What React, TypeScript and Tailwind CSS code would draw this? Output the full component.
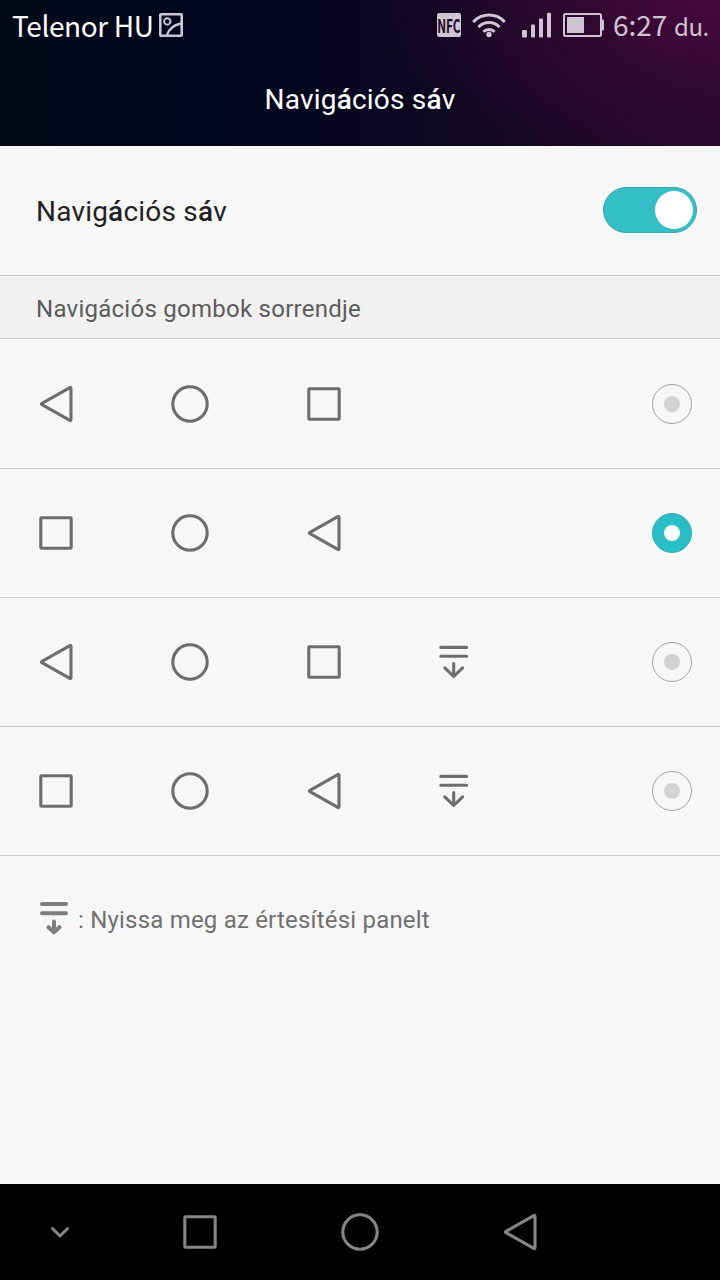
import React from 'react';

type IconName = 'back' | 'home' | 'recent' | 'panel';

function NavIcon({ name, className = '' }: { name: IconName; className?: string }) {
  return (
    <svg
      viewBox="0 0 40 40"
      className={`h-10 w-10 shrink-0 ${className}`}
      fill="none"
      stroke="currentColor"
      strokeWidth="3.1"
      strokeLinecap="round"
      strokeLinejoin="round"
    >
      {name === 'back' && <path d="M6 19.3 33.8 3.6Q35 3 35 4.4V35.6Q35 37 33.8 36.4L6 20.7Q4.7 20 6 19.3Z" />}
      {name === 'home' && <circle cx="20" cy="20" r="17.2" />}
      {name === 'recent' && <rect x="4.8" y="4.8" width="30.4" height="30.4" rx="0.8" />}
      {name === 'panel' && <path d="M6.8 5.4H32.6M6.8 14.3H32.6M19.7 21.5V34.2M10.8 25.9 19.7 34.5 28.6 25.9" />}
    </svg>
  );
}

function Radio({ checked }: { checked: boolean }) {
  return checked ? (
    <span className="flex size-10 items-center justify-center rounded-full border border-[#2fabb0] bg-[#27bfc5]">
      <span className="size-4 rounded-full bg-white" />
    </span>
  ) : (
    <span className="flex size-10 items-center justify-center rounded-full border border-[#a3a3a3]">
      <span className="size-4 rounded-full bg-[#d2d2d2]" />
    </span>
  );
}

const options: { icons: IconName[]; checked: boolean }[] = [
  { icons: ['back', 'home', 'recent'], checked: false },
  { icons: ['recent', 'home', 'back'], checked: true },
  { icons: ['back', 'home', 'recent', 'panel'], checked: false },
  { icons: ['recent', 'home', 'back', 'panel'], checked: false },
];

function Title() {
  return (
    <>
      Navig<span className="font-medium">á</span>ciós s<span className="font-medium">á</span>v
    </>
  );
}

function StatusBar() {
  return (
    <div className="flex h-[50px] items-center pl-3 font-['Noto_Sans_CJK_SC',sans-serif] text-[#cfc4d2]">
      <span className="w-[147px] shrink-0 text-[28px] leading-[50px] tracking-[-0.4px] whitespace-nowrap text-white">
        Telenor HU
      </span>
      <svg viewBox="0 0 24 24" className="size-6 shrink-0" fill="none" stroke="#c9c7d5">
        <rect x="1.3" y="1.3" width="21.4" height="21.4" rx="0.6" strokeWidth="2.6" />
        <circle cx="8.3" cy="8.4" r="3.2" strokeWidth="1.9" />
        <path d="M8 22C10 16 14 12 22 10.5" strokeWidth="2.3" />
      </svg>
      <span className="ml-[254px] flex size-6 shrink-0 items-center justify-center rounded-[2px] bg-[#cfc4d2]">
        <span className="scale-x-[0.62] text-[19px] leading-6 font-bold text-[#1c0b28]">NFC</span>
      </span>
      <svg viewBox="0 0 36 26" className="ml-[10px] h-[26px] w-9 shrink-0" fill="none" stroke="currentColor" strokeWidth="3">
        <path d="M2.2 10C11 0.8 25 0.8 33.8 10M7.4 15.1C13.5 8.9 22.5 8.9 28.6 15.1M12.3 19.8C15.5 16.6 20.5 16.6 23.7 19.8" />
        <circle cx="18" cy="22.5" r="2.7" fill="currentColor" stroke="none" />
      </svg>
      <svg viewBox="0 0 30 26" className="ml-[15px] h-[26px] w-[30px] shrink-0" fill="currentColor">
        <rect x="0" y="18" width="5" height="7.4" rx="1" />
        <rect x="9" y="12.5" width="4" height="12.9" rx="1" />
        <rect x="17" y="6.5" width="4" height="18.9" rx="1" />
        <rect x="25" y="0.8" width="4" height="24.6" rx="1" />
      </svg>
      <svg viewBox="0 0 41 24" className="ml-[11px] h-6 w-[41px] shrink-0" fill="currentColor">
        <rect x="1" y="1" width="37" height="22" rx="1.5" fill="none" stroke="currentColor" strokeWidth="2" />
        <rect x="4" y="4" width="17" height="16" />
        <rect x="38.5" y="6.5" width="2.5" height="11" rx="1" />
      </svg>
      <span className="ml-[9px] flex shrink-0 items-baseline whitespace-nowrap">
        <span className="w-[61px] text-[28px] leading-[50px]">6:27</span>
        <span className="text-2xl leading-[50px] tracking-[-0.5px]">du.</span>
      </span>
    </div>
  );
}

export default function App() {
  return (
    <div className="flex h-[1280px] w-[720px] flex-col overflow-hidden bg-[#f7f7f7] font-['Roboto',sans-serif]">
      <header className="flex h-[146px] shrink-0 flex-col bg-[radial-gradient(ellipse_340px_180px_at_100%_0%,#48083f_0%,#3a0735aa_40%,#1f0a2600_100%),linear-gradient(90deg,#020817_0%,#01061c_25%,#05061e_42%,#0e0720_62%,#1e0926_85%,#240a2b_100%)]">
        <StatusBar />
        <h1 className="flex h-[96px] items-center justify-center pt-[3px] text-[28px] tracking-[0.2px] text-white">
          <span><Title /></span>
        </h1>
      </header>

      <div className="flex h-[130px] shrink-0 items-center justify-between border-b border-[#c8c8c8] pr-[23px] pl-9 text-[28px] tracking-[0.2px] text-[#222]">
        <span className="pt-[3px]"><Title /></span>
        <span className="mb-px flex h-[46px] w-[94px] items-center justify-end rounded-full border border-[#3ba9ad] bg-[#33bfc5] pr-[3px]">
          <span className="size-[38px] rounded-full bg-white" />
        </span>
      </div>

      <h2 className="flex h-[63px] shrink-0 items-center border-b border-[#c8c8c8] bg-[#f1f1f1] pt-[3px] pl-9 text-2xl tracking-[0.26px] text-[#5b5b5b]">
        Navigációs gombok sorrendje
      </h2>

      <ul className="shrink-0">
        {options.map((option, i) => (
          <li
            key={i}
            className="flex h-[129px] items-center border-b border-[#cbcbcb] pr-7 pl-9 text-[#6d6d6d] first:h-[130px] first:pt-px"
          >
            <div className="grid grow grid-cols-[134px_134px_130px_40px]">
              {option.icons.map((name) => (
                <NavIcon key={name} name={name} />
              ))}
            </div>
            <Radio checked={option.checked} />
          </li>
        ))}
      </ul>

      <p className="flex grow items-start pt-[43px] pl-9 text-2xl leading-[42px] tracking-[0.2px] text-[#707070]">
        <svg
          viewBox="0 0 36 40"
          className="h-10 w-9 shrink-0"
          fill="none"
          stroke="#7e7e7e"
          strokeWidth="4"
          strokeLinecap="round"
          strokeLinejoin="round"
        >
          <path d="M6 5H30M6 14.3H30M18 22.5V33M12.5 28.2 18 33.2 23.5 28.2" />
        </svg>
        <span className="ml-1.5">: Nyissa meg az értesítési panelt</span>
      </p>

      <nav className="flex h-24 shrink-0 items-center bg-black pl-10 text-[#858585]">
        <svg viewBox="0 0 40 40" className="size-10" fill="none" stroke="currentColor" strokeWidth="3" strokeLinecap="round" strokeLinejoin="round">
          <path d="M12.5 16.5 20 24 27.5 16.5" />
        </svg>
        <NavIcon name="recent" className="ml-[100px]" />
        <NavIcon name="home" className="ml-[120px]" />
        <NavIcon name="back" className="ml-[120px]" />
      </nav>
    </div>
  );
}
